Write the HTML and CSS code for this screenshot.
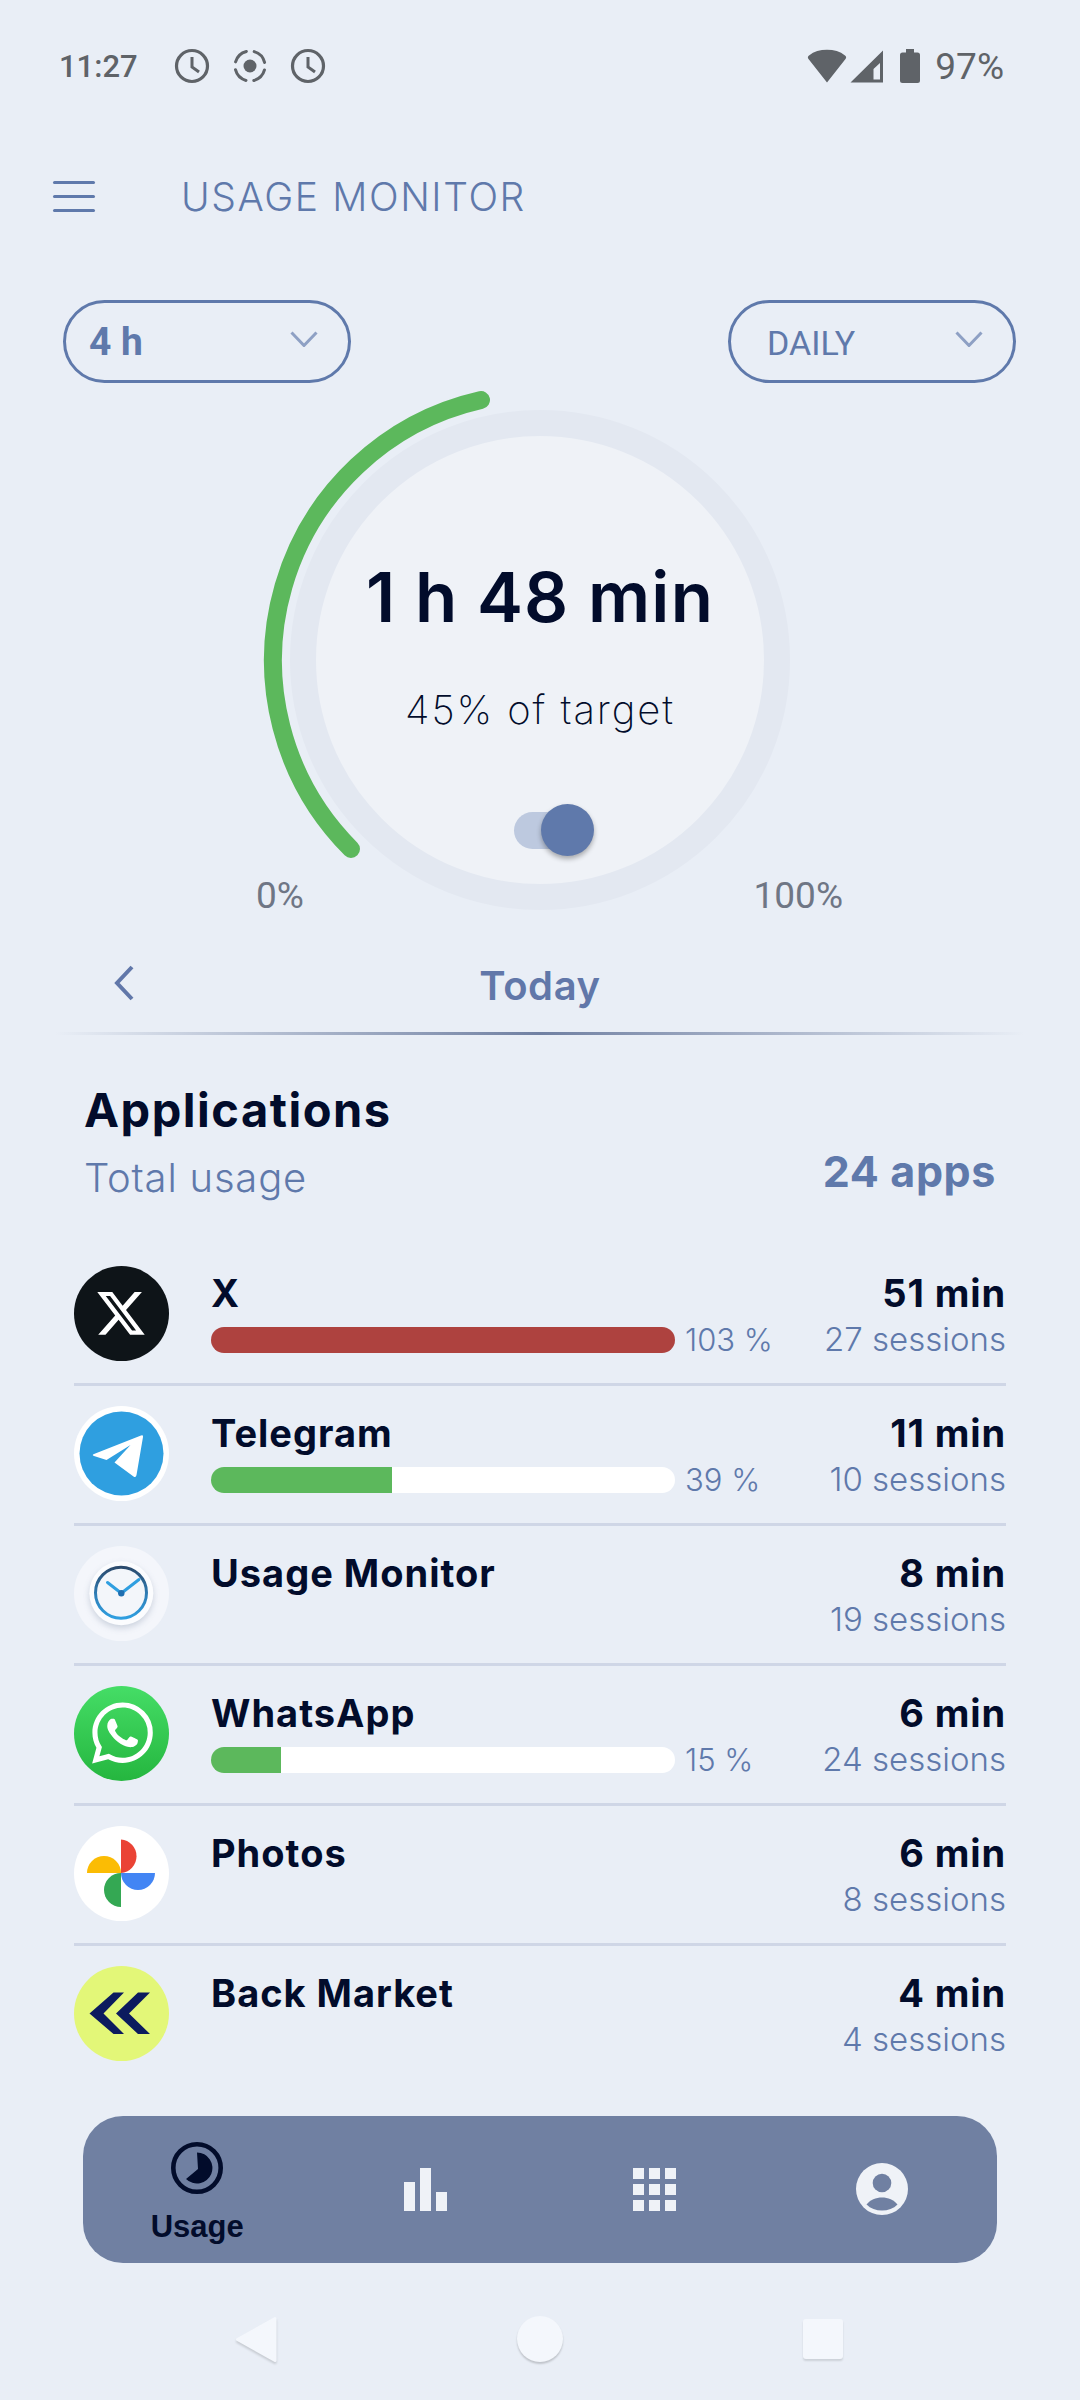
FILE: index.html
```html
<!DOCTYPE html>
<html lang="en">
<head>
<meta charset="utf-8">
<title>Usage Monitor</title>
<link rel="stylesheet" href="styles.css">
</head>
<body>
<div class="screen">
  <div class="status">
    <div class="status-left">
      <span class="time">11:27</span>
      <svg class="st-ic" viewBox="0 0 36 36"><circle cx="18" cy="18" r="15.5" fill="none" stroke="#5f6368" stroke-width="3.2"/><path d="M18 9v10l7 5" fill="none" stroke="#5f6368" stroke-width="3"/></svg>
      <svg class="st-ic" viewBox="0 0 36 36"><circle cx="18" cy="18" r="6.5" fill="#5f6368"/><circle cx="18" cy="18" r="15" fill="none" stroke="#5f6368" stroke-width="3" stroke-dasharray="15.5 8" stroke-dashoffset="-4" stroke-linecap="round"/></svg>
      <svg class="st-ic" viewBox="0 0 36 36"><circle cx="18" cy="18" r="15.5" fill="none" stroke="#5f6368" stroke-width="3.2"/><path d="M18 9v10l7 5" fill="none" stroke="#5f6368" stroke-width="3"/></svg>
    </div>
    <div class="status-right">
      <svg class="wifi" viewBox="0 0 40 34"><path d="M20 33.500 1.500 10Q0 8 2 6.500C7 2.500 13 .8 20 .8S33 2.500 38 6.500Q40 8 38.500 10Z" fill="#5f6368"/></svg>
      <svg class="signal" viewBox="0 0 34 33"><path fill-rule="evenodd" d="M33 0.500V32.500H0.500ZM30 13 23.500 19V29.500H30Z" fill="#5f6368"/></svg>
      <svg class="batt" viewBox="0 0 20 34"><path d="M6 0h8v3.500h3.500q2.500 0 2.500 2.500v25.500q0 2.500-2.500 2.500h-15q-2.500 0-2.500-2.500v-25.500q0-2.500 2.500-2.500h3.500z" fill="#5f6368"/></svg>
      <span class="pct">97%</span>
    </div>
  </div>

  <header class="topbar">
    <div class="burger"><i></i><i></i><i></i></div>
    <h1 class="title">USAGE MONITOR</h1>
  </header>

  <div class="pills">
    <div class="pill">
      <span class="pill-bold">4 h</span>
      <svg class="chev" viewBox="0 0 28 16"><path d="M1.500 1.500 14 14.500 26.500 1.500" fill="none" stroke="#8ea0c4" stroke-width="3"/></svg>
    </div>
    <div class="pill">
      <span class="pill-reg">DAILY</span>
      <svg class="chev" viewBox="0 0 28 16"><path d="M1.500 1.500 14 14.500 26.500 1.500" fill="none" stroke="#8ea0c4" stroke-width="3"/></svg>
    </div>
  </div>

  <section class="gauge">
    <svg class="gauge-art" viewBox="0 0 1080 530">
      <circle cx="540" cy="265" r="237" fill="#eff2f7" stroke="#e3e8f1" stroke-width="26"/>
      <path d="M351 454A267 267 0 0 1 481 5" fill="none" stroke="#5cb85c" stroke-width="18" stroke-linecap="round"/>
    </svg>
    <div class="gauge-text">
      <div class="gauge-value">1 h 48 min</div>
      <div class="gauge-sub">45% of target</div>
      <div class="toggle"><span class="knob"></span></div>
    </div>
    <div class="scale"><span>0%</span><span>100%</span></div>
  </section>

  <div class="day">
    <svg class="day-back" viewBox="0 0 20 36"><path d="M18 2 3 18 18 34" fill="none" stroke="#6177a9" stroke-width="4"/></svg>
    <span class="day-label">Today</span>
  </div>
  <div class="rule"></div>

  <section class="apps-head">
    <div>
      <h2 class="apps-title">Applications</h2>
      <div class="apps-sub">Total usage</div>
    </div>
    <div class="apps-count">24 apps</div>
  </section>

  <ul class="apps">
    <li class="app">
      <svg class="app-ic" viewBox="0 0 95 95"><circle cx="47.500" cy="47.500" r="47.500" fill="#0e1418"/><path transform="translate(20.500 21) scale(2.2)" fill="#fff" d="M18.244 2.250h3.308l-7.227 8.260 8.502 11.240H16.170l-5.214-6.817L4.990 21.750H1.680l7.730-8.835L1.254 2.250H8.080l4.713 6.231zm-1.161 17.520h1.833L7.084 4.126H5.117z"/></svg>
      <div class="app-main">
        <div class="app-name">X</div>
        <div class="bar-row"><div class="bar over"></div><span class="bar-pct">103 %</span></div>
      </div>
      <div class="app-side"><div class="app-time">51 min</div><div class="app-sess">27 sessions</div></div>
    </li>
    <li class="app">
      <svg class="app-ic" viewBox="0 0 95 95"><circle cx="47.500" cy="47.500" r="47.500" fill="#fff"/><circle cx="47.500" cy="47.500" r="42" fill="#2f9fe0"/><path d="M67 29.500Q69.500 28.500 69 31L62.500 69Q62 72 59.500 70.500L40.500 56.500 56.500 39 32.500 54 20 50Q17.500 49 20 48Z" fill="#fff"/></svg>
      <div class="app-main">
        <div class="app-name">Telegram</div>
        <div class="bar-row"><div class="bar"><div class="fill" style="width:39%"></div></div><span class="bar-pct">39 %</span></div>
      </div>
      <div class="app-side"><div class="app-time">11 min</div><div class="app-sess">10 sessions</div></div>
    </li>
    <li class="app">
      <svg class="app-ic" viewBox="0 0 95 95"><defs><linearGradient id="cr" x1="0" y1="0" x2="0" y2="1"><stop offset="0" stop-color="#2b4a6c"/><stop offset=".55" stop-color="#2f7fb8"/><stop offset="1" stop-color="#2f9fe0"/></linearGradient></defs><circle cx="47.500" cy="47.500" r="47.500" fill="#f4f6fb"/><circle class="clock-disc" cx="47.300" cy="47.300" r="32" fill="#fbfcfe"/><circle cx="47" cy="46.700" r="25.500" fill="#f3f6fa" stroke="url(#cr)" stroke-width="3"/><path d="M47.300 47.300 33.500 36.500M47.300 47.300 65 33.500" fill="none" stroke="#2f9fe0" stroke-width="3" stroke-linecap="round"/><circle cx="47.300" cy="47.300" r="3.200" fill="#1f6fb0"/></svg>
      <div class="app-main">
        <div class="app-name">Usage Monitor</div>
      </div>
      <div class="app-side"><div class="app-time">8 min</div><div class="app-sess">19 sessions</div></div>
    </li>
    <li class="app">
      <svg class="app-ic" viewBox="0 0 95 95"><defs><linearGradient id="wa" x1="0" y1="0" x2="0" y2="1"><stop offset="0" stop-color="#45dd66"/><stop offset="1" stop-color="#25b63f"/></linearGradient></defs><circle cx="47.500" cy="47.500" r="47.500" fill="url(#wa)"/><path transform="translate(18 16.500) scale(2.540)" fill="#fff" d="M17.472 14.382c-.297-.149-1.758-.867-2.030-.967-.273-.099-.471-.148-.670.150-.197.297-.767.966-.940 1.164-.173.199-.347.223-.644.075-.297-.150-1.255-.463-2.390-1.475-.883-.788-1.480-1.761-1.653-2.059-.173-.297-.018-.458.130-.606.134-.133.298-.347.446-.520.149-.174.198-.298.298-.497.099-.198.050-.371-.025-.520-.075-.149-.669-1.612-.916-2.207-.242-.579-.487-.500-.669-.510-.173-.008-.371-.010-.570-.010-.198 0-.520.074-.792.372-.272.297-1.040 1.016-1.040 2.479 0 1.462 1.065 2.875 1.213 3.074.149.198 2.096 3.200 5.077 4.487.709.306 1.262.489 1.694.625.712.227 1.360.195 1.871.118.571-.085 1.758-.719 2.006-1.413.248-.694.248-1.289.173-1.413-.074-.124-.272-.198-.570-.347m-5.421 7.403h-.004a9.870 9.870 0 01-5.031-1.378l-.361-.214-3.741.982.998-3.648-.235-.374a9.860 9.860 0 01-1.510-5.260c.001-5.450 4.436-9.884 9.888-9.884 2.640 0 5.122 1.030 6.988 2.898a9.825 9.825 0 012.893 6.994c-.003 5.450-4.437 9.884-9.885 9.884m8.413-18.297A11.815 11.815 0 0012.050 0C5.495 0 .160 5.335.157 11.892c0 2.096.547 4.142 1.588 5.945L.057 24l6.305-1.654a11.882 11.882 0 005.683 1.448h.005c6.554 0 11.890-5.335 11.893-11.893a11.821 11.821 0 00-3.480-8.413z"/></svg>
      <div class="app-main">
        <div class="app-name">WhatsApp</div>
        <div class="bar-row"><div class="bar"><div class="fill" style="width:15%"></div></div><span class="bar-pct">15 %</span></div>
      </div>
      <div class="app-side"><div class="app-time">6 min</div><div class="app-sess">24 sessions</div></div>
    </li>
    <li class="app">
      <svg class="app-ic" viewBox="0 0 95 95"><circle cx="47.500" cy="47.500" r="47.500" fill="#fff"/><path d="M47 13.500A16.800 16.800 0 0 1 47 47Z" fill="#ea4335"/><path d="M13 47A17 17 0 0 1 47 47Z" fill="#fbbc04"/><path d="M47 47A17 17 0 0 0 81 47Z" fill="#4285f4"/><path d="M47 47A17 17 0 0 0 47 81Z" fill="#34a853"/></svg>
      <div class="app-main">
        <div class="app-name">Photos</div>
      </div>
      <div class="app-side"><div class="app-time">6 min</div><div class="app-sess">8 sessions</div></div>
    </li>
    <li class="app">
      <svg class="app-ic" viewBox="0 0 95 95"><circle cx="47.500" cy="47.500" r="47.500" fill="#e3f778"/><path d="M15.500 47.500 39.500 26.500H50L29.500 47.500 50 68H39.500ZM42 47.500 64 26.500H76L55 47.500 76 68H64Z" fill="#0c1b5e"/></svg>
      <div class="app-main">
        <div class="app-name">Back Market</div>
      </div>
      <div class="app-side"><div class="app-time">4 min</div><div class="app-sess">4 sessions</div></div>
    </li>
  </ul>

  <nav class="tabs">
    <div class="tab active">
      <svg class="tab-ic round" viewBox="0 0 52 52"><circle cx="26" cy="26" r="23.700" fill="none" stroke="#020c2b" stroke-width="4.600"/><path d="M26 10.500A15.500 15.500 0 1 1 15 37L27 27Z" fill="#020c2b"/></svg>
      <span class="tab-label">Usage</span>
    </div>
    <div class="tab">
      <svg class="tab-ic" viewBox="0 0 43 43"><path d="M0 14h11v29H0zM16 0h11v43H16zM32 24h11v19H32z" fill="#eff2f7"/></svg>
    </div>
    <div class="tab">
      <svg class="tab-ic" viewBox="0 0 43 43"><path d="M0 0h11v11H0zM16 0h11v11H16zM32 0h11v11H32zM0 16h11v11H0zM16 16h11v11H16zM32 16h11v11H32zM0 32h11v11H0zM16 32h11v11H16zM32 32h11v11H32z" fill="#eff2f7"/></svg>
    </div>
    <div class="tab">
      <svg class="tab-ic round" viewBox="0 0 52 52"><circle cx="26" cy="26" r="26" fill="#eff2f7"/><circle cx="26" cy="20" r="9.300" fill="#7080a2"/><path d="M10.500 41.500C14 37 20 34.500 26 34.500S38 37 41.500 41.500C37.500 45.500 32 47.500 26 47.500S14.500 45.500 10.500 41.500Z" fill="#7080a2"/></svg>
    </div>
  </nav>

  <div class="sysnav">
    <svg class="sys-back" viewBox="0 0 41 45"><path d="M39 1.500 1.500 22.500 39 43.500Z" fill="#f4f7fc" stroke="#f4f7fc" stroke-width="3" stroke-linejoin="round"/></svg>
    <span class="sys-home"></span>
    <span class="sys-square"></span>
  </div>
</div>
</body>
</html>
```

FILE: styles.css
```css
* { box-sizing: border-box; }
html, body { margin: 0; padding: 0; }
body { background: #e9eef6; font-family: "Inter", "Liberation Sans", sans-serif; color: #020c2b; }
.screen { width: 1080px; height: 2400px; overflow: hidden; display: flex; flex-direction: column; }

.status { height: 132px; display: flex; justify-content: space-between; align-items: center; padding: 0 76px 0 59px; font-family: "Roboto", sans-serif; color: #5f6368; }
.status-left, .status-right { display: flex; align-items: center; }
.time { font-size: 31px; font-weight: 500; width: 115px; }
.st-ic { width: 36px; height: 36px; margin-right: 22px; }
.status-right { gap: 3px; }
.wifi { width: 40px; height: 34px; }
.signal { width: 34px; height: 33px; }
.batt { width: 20px; height: 34px; margin: 0 12px 0 13px; }
.pct { font-size: 37px; }

.topbar { height: 64px; margin-top: 32px; display: flex; align-items: center; padding-left: 53px; }
.burger { width: 42px; height: 31px; display: flex; flex-direction: column; justify-content: space-between; margin-right: 86px; }
.burger i { display: block; height: 3px; background: #5f79ab; border-radius: 2px; }
.title { margin: 0; font-size: 39px; font-weight: 300; color: #5f79ab; letter-spacing: 1.6px; }

.pills { display: flex; justify-content: space-between; padding: 0 64px 0 63px; margin-top: 72px; }
.pill { width: 288px; height: 83px; border: 3px solid #5f79ab; border-radius: 42px; display: flex; align-items: center; justify-content: space-between; padding: 0 30px 0 23px; color: #5f79ab; font-family: "Roboto", sans-serif; }
.pill-bold { font-size: 39px; font-weight: 700; }
.pill-reg { font-size: 34px; padding-left: 13px; padding-top: 2px; }
.chev { width: 28px; height: 16px; margin-top: -6px; }

.gauge { position: relative; height: 530px; margin-top: 12px; }
.gauge-art { position: absolute; left: 0; top: 0; width: 1080px; height: 530px; overflow: visible; }
.gauge-text { position: relative; display: flex; flex-direction: column; align-items: center; padding-top: 162px; }
.gauge-value { font-size: 69px; font-weight: 600; line-height: 80px; letter-spacing: 1.2px; }
.gauge-sub { font-size: 40px; font-weight: 200; line-height: 46px; margin-top: 50px; letter-spacing: 1.9px; }
.toggle { position: relative; width: 72px; height: 37px; border-radius: 19px; background: #bdc9df; margin: 79px 0 0 20px; }
.knob { position: absolute; right: -8px; top: -8px; width: 53px; height: 52px; border-radius: 50%; background: #5f79ab; box-shadow: 0 3px 5px rgba(0,0,0,.3); }
.scale { position: absolute; left: 256px; right: 237px; top: 481px; display: flex; justify-content: space-between; font-family: "Roboto", sans-serif; font-size: 37px; color: #6f7685; line-height: 40px; }

.day { position: relative; height: 74px; margin-top: 33px; display: flex; align-items: center; justify-content: center; }
.day-back { position: absolute; left: 114px; top: 7px; width: 20px; height: 36px; }
.day-label { font-size: 40px; font-weight: 600; color: #6177a9; margin-top: -20px; letter-spacing: .6px; }
.rule { height: 3px; margin: 0 55px; background: linear-gradient(90deg, rgba(112,128,162,0), #7080a2 50%, rgba(112,128,162,0)); }

.apps-head { display: flex; justify-content: space-between; align-items: flex-end; padding: 0 84px; margin-top: 48px; }
.apps-title { margin: 0; font-size: 47px; font-weight: 700; line-height: 54px; letter-spacing: 1.5px; }
.apps-sub { font-size: 40px; font-weight: 300; line-height: 46px; color: #5f79ab; margin-top: 18px; letter-spacing: .8px; }
.apps-count { font-size: 43px; font-weight: 700; color: #5f79ab; line-height: 50px; margin-bottom: 5px; letter-spacing: .6px; }

.apps { list-style: none; margin: 45px 0 0; padding: 0 74px; }
.app { height: 140px; padding-top: 20px; display: flex; border-bottom: 3px solid #cfd6e6; }
.app:last-child { border-bottom: 0; }
.app-ic { width: 95px; height: 95px; flex: none; margin-right: 42px; }
.clock-disc { filter: drop-shadow(0 3px 3px rgba(60,80,120,.22)); }
.app-main { flex: 1; min-width: 0; padding-top: 4px; }
.app-name { font-size: 38px; font-weight: 700; line-height: 46px; letter-spacing: 1px; }
.bar-row { display: flex; align-items: center; margin-top: 11px; }
.bar { width: 464px; height: 26px; border-radius: 13px; background: #fff; overflow: hidden; }
.bar.over { background: #ae423f; }
.fill { height: 100%; background: #5cb85c; }
.bar-pct { font-size: 31px; font-weight: 300; color: #5f79ab; margin-left: 10px; line-height: 26px; }
.app-side { text-align: right; flex: none; padding-top: 4px; }
.app-time { font-size: 38px; font-weight: 700; line-height: 46px; letter-spacing: .9px; }
.app-sess { font-size: 33px; font-weight: 300; color: #5f79ab; line-height: 40px; margin-top: 3px; }

.tabs { margin: 30px 83px 0; height: 147px; border-radius: 40px; background: #7080a2; display: grid; grid-template-columns: repeat(4, 1fr); }
.tab { display: flex; flex-direction: column; align-items: center; padding-top: 52px; }
.tab.active { padding-top: 26px; }
.tab-ic { width: 43px; height: 43px; }
.tab-ic.round { width: 52px; height: 52px; margin-left: -2px; }
.tab.active .tab-ic.round { margin-left: 0; }
.tab:last-child { padding-top: 47px; }
.tab-label { font-family: "Liberation Sans", sans-serif; font-weight: 700; font-size: 31px; line-height: 36px; margin-top: 15px; }

.sysnav { flex: none; position: relative; display: flex; align-items: center; justify-content: center; height: 44px; margin-top: 54px; }
.sys-back { position: absolute; left: 236px; top: 0; width: 41px; height: 45px; filter: drop-shadow(0 2px 1px rgba(0,0,0,.15)); }
.sys-home { width: 46px; height: 46px; border-radius: 50%; background: #f4f7fc; box-shadow: 0 2px 2px rgba(0,0,0,.18); }
.sys-square { position: absolute; left: 803px; top: 2px; width: 40px; height: 40px; border-radius: 3px; background: #f4f7fc; box-shadow: 0 2px 2px rgba(0,0,0,.12); }
```
